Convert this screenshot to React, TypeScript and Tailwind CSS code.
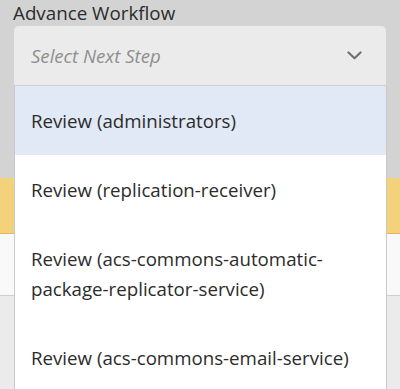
export default function App() {
  const items = [
    "Review (administrators)",
    "Review (replication-receiver)",
    "Review (acs-commons-automatic-package-replicator-service)",
    "Review (acs-commons-email-service)",
  ];
  return (
    <div
      className="relative w-[400px] h-[389px] overflow-hidden bg-[#ebebeb]"
      style={{ fontFamily: '"Open Sans", "Noto Sans", sans-serif' }}
    >
      <div className="h-[178px] bg-[#d3d3d3] px-[14px] pt-0">
        <div className="text-[18.8px] leading-[26px] text-[#2c2c2c] -ml-[1px]">Advance Workflow</div>
        <div className="h-[60px] bg-[#ebebeb] rounded-t-[5px] border-b border-[#cdcdcd] flex items-center justify-between pl-[17px] pr-[24px]">
          <span className="italic text-[18.6px] text-[#8f8f8f]">Select Next Step</span>
          <svg width="15" height="9" viewBox="0 0 15 9" fill="none">
            <path d="M1.5 1.5 L7.5 7.2 L13.5 1.5" stroke="#707070" strokeWidth="2.2" strokeLinecap="round" strokeLinejoin="round" />
          </svg>
        </div>
      </div>
      <div className="h-[56px] bg-[#f4d17b] border-b border-[#e9b35a]" />
      <div className="h-[62px] bg-[#f9f9f9] border-b border-[#cfcfcf]" />
      <div className="absolute left-[14px] top-[86px] w-[373px] bg-white border-x border-[#c9c9c9]">
        {items.map((t, i) => (
          <div
            key={i}
            className={`pl-[16px] pr-[20px] py-[19.5px] text-[18.7px] leading-[30px] text-[#2c2c2c] ${i === 0 ? "bg-[#e1e8f6]" : "bg-white"}`}
          >
            {t}
          </div>
        ))}
      </div>
    </div>
  );
}
